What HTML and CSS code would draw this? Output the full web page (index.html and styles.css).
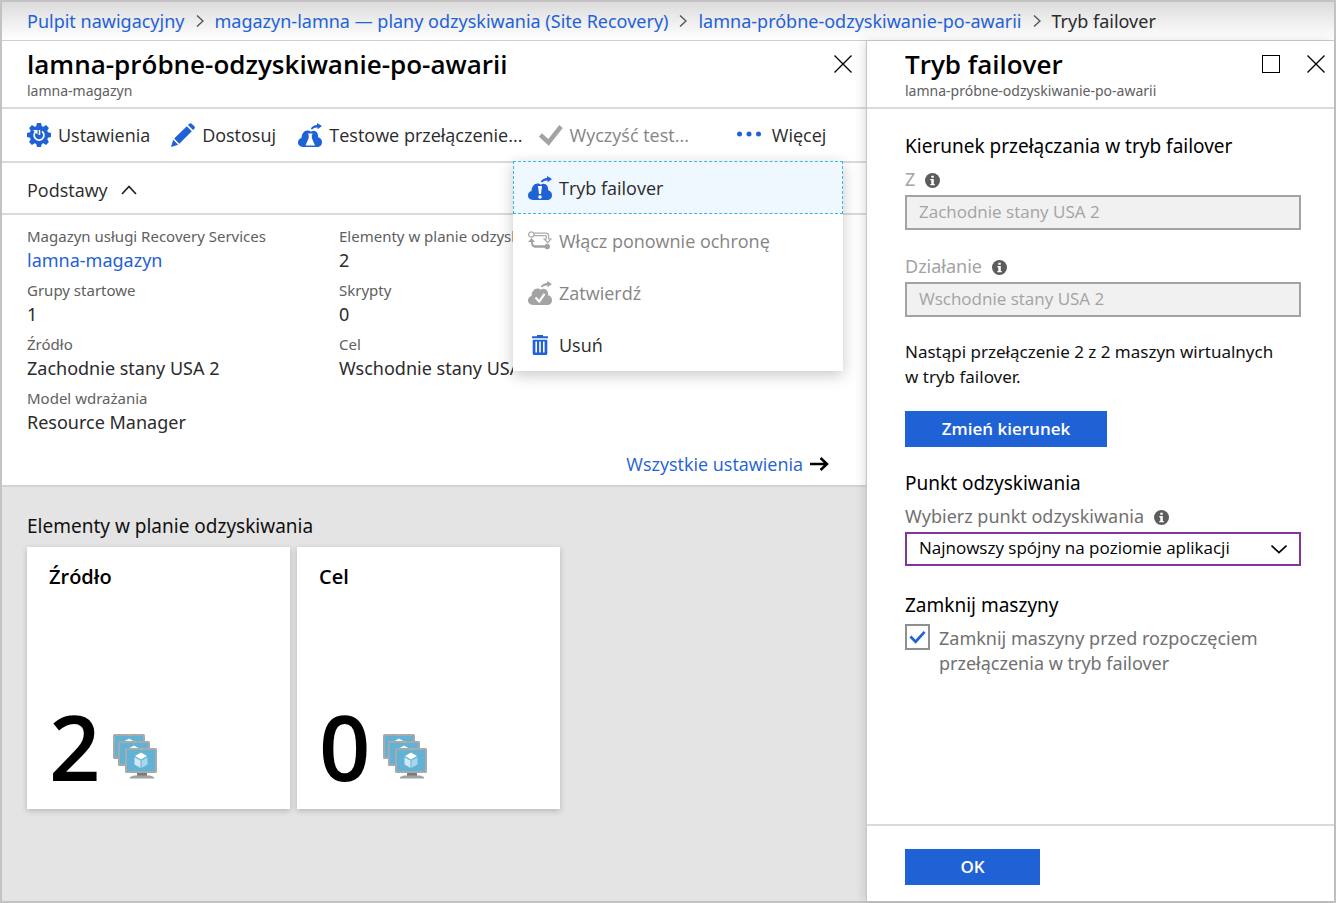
FILE: index.html
```html
<!DOCTYPE html>
<html lang="pl">
<head>
<meta charset="utf-8">
<meta name="viewport" content="width=device-width, initial-scale=1">
<title>Tryb failover</title>
<link rel="stylesheet" href="styles.css">
</head>
<body>
<svg class="defs" aria-hidden="true">
  <symbol id="cloud" viewBox="0 0 24 24">
    <path d="M5 24C2 24 0 22 0 19.300C0 17 1.500 15.400 3.500 14.900C3.700 11 6 7.600 9.500 7.600C11 7.600 12 8 12.800 8.800C14 7.600 16 7.400 17.500 8.300C19.600 9.500 20.300 12 20.200 14.300C22.600 14.900 24 16.900 24 19.200C24 22 22 24 19 24Z"/>
    <path d="M12.800 5.600C14.200 3 16.500 1.900 19 1.900V0L24 3L19.600 6.300V4.500C17.200 4.300 15.500 5 14 6.600Z"/>
  </symbol>
  <symbol id="close" viewBox="0 0 18 18"><path d="M.500.500L17.500 17.500M17.500.500L.500 17.500" fill="none" stroke="#000" stroke-width="1.300"/></symbol>
  <symbol id="chevron" viewBox="0 0 8 12"><path d="M1 .500L7 6L1 11.500" fill="none" stroke="#555" stroke-width="1.400"/></symbol>
  <symbol id="info" viewBox="0 0 15 15"><circle cx="7.500" cy="7.500" r="7.500" fill="#5c5c5c"/><path d="M6.300 2.700h2.500v2h-2.500zM5.300 6h3.500v5h1v1.300H5.300V11h1V7.300h-1z" fill="#fff"/></symbol>
  <symbol id="monitor" viewBox="0 0 32 31">
    <rect width="32" height="25" rx="1.500" fill="#a7a9ab"/>
    <rect x="2" y="2" width="28" height="21" fill="#62b2d8"/>
    <path d="M15 .500h3v1h-3z" fill="#c5bd6a"/>
    <path d="M16 4.500L22 8L16 11.500L10 8Z" fill="#fff"/>
    <path d="M9.500 9.200L15.500 12.600V20L9.500 16.500Z" fill="#cfe8f4"/>
    <path d="M22.500 9.200L16.500 12.600V20L22.500 16.500Z" fill="#a8d6ec"/>
  </symbol>
  <symbol id="machines" viewBox="0 0 45 46">
    <use href="#monitor" x="0" y="0" width="32" height="31"/>
    <use href="#monitor" x="5" y="7" width="32" height="31"/>
    <use href="#monitor" x="11" y="14" width="34" height="31" preserveAspectRatio="xMaxYMin"/>
    <path d="M24 39h10v3H24z" fill="#7a7a7a"/>
    <path d="M17 43l4-1.500h16l4 1.500v1.500H17z" fill="#a0a1a2"/>
  </symbol>
</svg>
<div class="portal">
  <nav class="breadcrumb" aria-label="Ścieżka nawigacji">
    <a href="#">Pulpit nawigacyjny</a>
    <svg class="crumb-sep"><use href="#chevron"/></svg>
    <a href="#">magazyn-lamna — plany odzyskiwania (Site Recovery)</a>
    <svg class="crumb-sep"><use href="#chevron"/></svg>
    <a href="#">lamna-próbne-odzyskiwanie-po-awarii</a>
    <svg class="crumb-sep"><use href="#chevron"/></svg>
    <span>Tryb failover</span>
  </nav>
  <div class="blades">
    <main class="plan">
      <header class="blade-head">
        <div>
          <h1 class="blade-title">lamna-próbne-odzyskiwanie-po-awarii</h1>
          <p class="blade-sub">lamna-magazyn</p>
        </div>
        <button class="icon-btn" type="button" aria-label="Zamknij"><svg class="win-icon"><use href="#close"/></svg></button>
      </header>
      <div class="toolbar">
        <button class="tool" type="button">
          <svg class="icon" viewBox="0 0 24 24"><g fill="#1f62d6"><circle cx="12" cy="12" r="9.300"/><path id="teeth" d="M9 4L10 0h4L15 4v16L14 24h-4L9 20z"/><use href="#teeth" transform="rotate(45 12 12)"/><use href="#teeth" transform="rotate(90 12 12)"/><use href="#teeth" transform="rotate(135 12 12)"/></g><path d="M8.300 9A4.900 4.900 0 1 0 15 8.300" fill="none" stroke="#fff" stroke-width="1.700"/><path d="M6 7h4.500v4.500z" fill="#fff"/><path d="M12.500 7v5" stroke="#fff" stroke-width="1.500"/></svg>
          <span>Ustawienia</span></button>
        <button class="tool" type="button">
          <svg class="icon" viewBox="0 0 24 24"><path fill="#1f62d6" d="M0 24L2.200 16.800L7.200 21.800ZM3.200 15.500L15.800 3.200L20.800 8.200L8.300 20.700ZM17 2L18.300.7Q19.500-.3 20.700.7L23.300 3.300Q24.500 4.500 23.300 5.700L22 7Z"/></svg>
          <span>Dostosuj</span></button>
        <button class="tool" type="button">
          <svg class="icon" viewBox="0 0 24 24"><use href="#cloud" fill="#1f62d6"/><path d="M10 10.500h4.500v1h-.700v3.500l3.200 7.500H7.500l3.200-7.500v-3.500H10z" fill="#fff"/></svg>
          <span>Testowe przełączenie...</span></button>
        <button class="tool tool-off" type="button" disabled>
          <svg class="icon" viewBox="0 0 24 24"><path d="M1.500 12L9.500 19.500L22 3.500" fill="none" stroke="#a3a3a3" stroke-width="4.500"/></svg>
          <span>Wyczyść test...</span></button>
        <button class="tool tool-more" type="button" aria-expanded="true">
          <svg class="icon" viewBox="0 0 24 24"><g fill="#1f62d6"><circle cx="2.500" cy="11" r="2.500"/><circle cx="12" cy="11" r="2.500"/><circle cx="21.500" cy="11" r="2.500"/></g></svg>
          <span>Więcej</span></button>
        <div class="menu" role="menu">
          <button class="menu-item menu-current" type="button" role="menuitem">
            <svg class="icon" viewBox="0 0 24 24"><use href="#cloud" fill="#1f62d6"/><path d="M10 10h4l-1 8h-2z" fill="#fff"/><circle cx="12" cy="21" r="1.800" fill="#fff"/></svg>
            Tryb failover</button>
          <button class="menu-item" type="button" role="menuitem" disabled>
            <svg class="icon" viewBox="0 0 24 24"><g fill="none" stroke="#aaa" stroke-width="1.200"><circle cx="3.300" cy="5.500" r="2.700"/><path d="M6 4.200H18q2.700.2 2.700 3V10H23l-3.300 3.800L16.200 10H18.300V7.500Q18.200 6.700 17.300 6.700H6"/></g><path d="M3.500 9L7 13H5q0 3.300 2 3.300h9.700a2.800 2.800 0 1 1 0 2.400H7q-4 0-4-5.700H0z" fill="#a3a3a3"/></svg>
            Włącz ponownie ochronę</button>
          <button class="menu-item" type="button" role="menuitem" disabled>
            <svg class="icon" viewBox="0 0 24 24"><use href="#cloud" fill="#a3a3a3"/><path d="M7.500 16.500L11.200 20.500L16.500 12.800" fill="none" stroke="#fff" stroke-width="2.200"/></svg>
            Zatwierdź</button>
          <button class="menu-item" type="button" role="menuitem">
            <svg class="icon" viewBox="0 0 24 24"><path d="M9 2h6v1.300h5v2H4v-2h5zM4.700 6.700h14.600V20.500q0 1.500-1.500 1.500H6.200q-1.500 0-1.500-1.500z" fill="#1f62d6"/><path d="M8.200 8.500v11M12 8.500v11M15.800 8.500v11" stroke="#fff" stroke-width="1.600"/></svg>
            Usuń</button>
        </div>
      </div>
      <button class="section-toggle" type="button" aria-expanded="true">Podstawy
        <svg class="toggle-icon" viewBox="0 0 16 10"><path d="M1 9L8 1.500L15 9" fill="none" stroke="#222" stroke-width="1.700"/></svg></button>
      <section class="essentials">
        <dl class="facts">
          <div><dt>Magazyn usługi Recovery Services</dt><dd><a href="#">lamna-magazyn</a></dd></div>
          <div><dt>Elementy w planie odzyskiwania</dt><dd>2</dd></div>
          <div><dt>Grupy startowe</dt><dd>1</dd></div>
          <div><dt>Skrypty</dt><dd>0</dd></div>
          <div><dt>Źródło</dt><dd>Zachodnie stany USA 2</dd></div>
          <div><dt>Cel</dt><dd>Wschodnie stany USA 2</dd></div>
          <div><dt>Model wdrażania</dt><dd>Resource Manager</dd></div>
        </dl>
        <a class="all-settings" href="#">Wszystkie ustawienia
          <svg class="arrow" viewBox="0 0 19 14"><path d="M0 7h17M10.500 1L17 7L10.500 13" fill="none" stroke="#000" stroke-width="2.500"/></svg></a>
      </section>
      <section class="items">
        <h2 class="items-title">Elementy w planie odzyskiwania</h2>
        <div class="cards">
          <article class="card"><h3 class="card-title">Źródło</h3><div class="card-count"><span>2</span><svg class="machines"><use href="#machines"/></svg></div></article>
          <article class="card"><h3 class="card-title">Cel</h3><div class="card-count"><span>0</span><svg class="machines"><use href="#machines"/></svg></div></article>
        </div>
      </section>
    </main>
    <aside class="failover">
      <header class="blade-head">
        <div>
          <h2 class="blade-title">Tryb failover</h2>
          <p class="blade-sub">lamna-próbne-odzyskiwanie-po-awarii</p>
        </div>
        <div class="win-btns">
          <button class="icon-btn" type="button" aria-label="Maksymalizuj"><svg class="win-icon" viewBox="0 0 18 18"><rect x=".5" y=".5" width="17" height="17" fill="none" stroke="#000"/></svg></button>
          <button class="icon-btn" type="button" aria-label="Zamknij"><svg class="win-icon"><use href="#close"/></svg></button>
        </div>
      </header>
      <form class="form" id="failover-form">
        <h3 class="form-title">Kierunek przełączania w tryb failover</h3>
        <label class="label label-off" for="from">Z <svg class="info"><use href="#info"/></svg></label>
        <input class="box" id="from" type="text" value="Zachodnie stany USA 2" disabled>
        <label class="label label-off label-next" for="to">Działanie <svg class="info"><use href="#info"/></svg></label>
        <input class="box" id="to" type="text" value="Wschodnie stany USA 2" disabled>
        <p class="note">Nastąpi przełączenie 2 z 2 maszyn wirtualnych w&nbsp;tryb failover.</p>
        <button class="primary primary-wide" type="button">Zmień kierunek</button>
        <h3 class="form-title">Punkt odzyskiwania</h3>
        <label class="label" for="point">Wybierz punkt odzyskiwania <svg class="info"><use href="#info"/></svg></label>
        <div class="select-wrap">
          <select class="box box-select" id="point"><option>Najnowszy spójny na poziomie aplikacji</option></select>
          <svg class="select-arrow" viewBox="0 0 16 10"><path d="M.5 1.500L8 8.500L15.500 1.500" fill="none" stroke="#000" stroke-width="1.700"/></svg>
        </div>
        <h3 class="form-title form-title-last">Zamknij maszyny</h3>
        <div class="check-row">
          <span class="check-box"><input class="check" id="shutdown" type="checkbox" checked><svg class="tick" viewBox="0 0 18 14"><path d="M1.500 6.500L7 12L16.500 1.500" fill="none" stroke="#1f62d6" stroke-width="2.800"/></svg></span>
          <label class="check-label" for="shutdown">Zamknij maszyny przed rozpoczęciem przełączenia w tryb failover</label>
        </div>
      </form>
      <footer class="form-foot"><button class="primary" type="submit" form="failover-form">OK</button></footer>
    </aside>
  </div>
</div>
</body>
</html>
```
FILE: styles.css
```css
* { box-sizing: border-box; }
body, h1, h2, h3, p, dl, dd { margin: 0; }
body {
  font: 400 18px/24px "Open Sans", "Noto Sans", sans-serif;
  color: #2b2b2b;
  background: #fff;
}
button, input, select { font: inherit; color: inherit; }
button { border: 0; padding: 0; background: none; text-align: left; cursor: pointer; }
button:disabled { cursor: default; }
a { color: #1f62d6; text-decoration: none; }
svg { display: block; flex: none; }
.defs { position: absolute; width: 0; height: 0; }
.breadcrumb, .facts, .items-title, .form, .blade-sub { font-family: "Noto Sans", "Open Sans", sans-serif; }
.portal {
  min-height: 100vh;
  display: flex;
  flex-direction: column;
  border: 2px solid #c3c3c3;
}

.breadcrumb {
  display: flex;
  align-items: center;
  gap: 11px;
  height: 39px;
  padding-left: 25px;
  border-bottom: 1px solid #cfcfcf;
  background: linear-gradient(#dcdcdc, #fff);
  white-space: nowrap;
}
.crumb-sep { width: 8px; height: 12px; }

.blades { flex: 1; display: grid; grid-template-columns: 865fr 467fr; }
.plan { display: flex; flex-direction: column; min-width: 0; background: #fff; }
.failover {
  z-index: 1;
  display: flex;
  flex-direction: column;
  min-width: 0;
  background: #fff;
  box-shadow: -1px 0 1px #c8c8c8, -3px 0 10px rgba(0, 0, 0, .12);
}
.blade-head {
  display: flex;
  justify-content: space-between;
  height: 68px;
  padding: 7px 15px 0 25px;
  border-bottom: 2px solid #dadada;
}
.failover .blade-head { padding: 7px 9px 0 38px; }
.blade-title { font-size: 26px; line-height: 32px; font-weight: 600; color: #000; white-space: nowrap; }
.blade-sub { font-size: 14px; line-height: 22px; color: #606060; }
.icon-btn { height: 32px; }
.win-icon { width: 18px; height: 18px; }
.win-btns { display: flex; gap: 27px; }

.toolbar {
  position: relative;
  display: grid;
  grid-template-columns: 144fr 127fr 240fr 198fr 130fr;
  align-items: center;
  height: 54px;
  padding-left: 25px;
  border-bottom: 2px solid #dadada;
  white-space: nowrap;
}
.tool { display: flex; align-items: center; gap: 7px; }
.tool-off { color: #858585; }
.tool-more { gap: 11px; }
.icon { width: 24px; height: 24px; }
.menu {
  position: absolute;
  top: 52px;
  right: 24px;
  width: 330px;
  background: #fff;
  box-shadow: 0 4px 14px rgba(0, 0, 0, .22);
}
.menu-item {
  display: flex;
  align-items: center;
  gap: 7px;
  width: 100%;
  height: 52px;
  padding: 0 15px;
}
.menu-item:disabled { color: #858585; }
.menu-current { height: 53px; margin-bottom: 1px; padding: 0 14px; border: 1px dashed #39b8e8; background: #eff7ff; }

.section-toggle {
  display: flex;
  align-items: center;
  gap: 13px;
  height: 52px;
  padding: 3px 0 0 25px;
  border-bottom: 2px solid #dadada;
}
.toggle-icon { width: 16px; height: 10px; }
.essentials { padding: 9px 38px 9px 25px; border-bottom: 2px solid #d2d2d2; }
.facts { display: grid; grid-template-columns: 312fr 174fr 316fr; row-gap: 6px; white-space: nowrap; }
.facts div { min-width: 0; overflow: hidden; }
.facts div:nth-child(odd) { grid-column: 1; }
.facts div:nth-child(even) { grid-column: 2; }
.facts dt { font-size: 15px; color: #606060; }
.all-settings {
  display: flex;
  align-items: center;
  justify-content: flex-end;
  gap: 7px;
  margin-top: 18px;
}
.arrow { width: 19px; height: 14px; }

.items { flex: 1; padding: 26px 25px; background: #e4e4e4; }
.items-title { font-size: 19px; line-height: 26px; font-weight: 400; color: #111; }
.cards { display: flex; flex-wrap: wrap; gap: 7px; margin-top: 8px; }
.card {
  display: flex;
  flex-direction: column;
  justify-content: space-between;
  width: 263px;
  height: 262px;
  padding: 18px 22px;
  background: #fff;
  box-shadow: 0 2px 6px rgba(0, 0, 0, .2);
}
.card-title { font-size: 20px; font-weight: 600; color: #000; }
.card-count { display: flex; align-items: flex-end; gap: 13px; color: #000; }
.card-count span { font-size: 90px; line-height: 90px; font-weight: 600; }
.machines { width: 45px; height: 46px; margin-bottom: 11px; }

.form { flex: 1; padding: 24px 33px 24px 38px; }
.form-title { font-size: 19px; line-height: 26px; font-weight: 400; color: #000; }
.label { display: flex; align-items: center; gap: 10px; height: 24px; margin-top: 8px; margin-bottom: 4px; color: #717171; }
.label-off { color: #a3a3a3; }
.label-next { margin-top: 24px; }
.info { width: 15px; height: 15px; margin-top: 2px; }
.box {
  display: block;
  width: 100%;
  height: 35px;
  padding: 0 12px 2px;
  border: 2px solid #a3a3a3;
  border-radius: 0;
  background: #f1f1f1;
  font-family: "Open Sans", "Noto Sans", sans-serif;
  font-size: 17px;
}
.box:disabled { color: #a3a3a3; }
.note { margin: 22px 0; font-size: 17px; line-height: 25px; color: #111; }
.primary { width: 135px; height: 36px; background: #1f62d6; color: #fff; font-family: "Open Sans", "Noto Sans", sans-serif; font-weight: 600; font-size: 17px; text-align: center; }
.primary-wide { display: block; width: 202px; margin-bottom: 23px; }
.select-wrap { position: relative; }
.box-select { appearance: none; height: 34px; border-color: #80379b; background: #fff; color: #000; }
.select-arrow { position: absolute; right: 14px; top: 12px; width: 16px; height: 10px; pointer-events: none; }
.form-title-last { margin-top: 26px; }
.check-row { display: flex; gap: 9px; margin-top: 6px; }
.check-box { position: relative; flex: none; width: 25px; height: 26px; }
.check { appearance: none; display: block; width: 100%; height: 100%; margin: 0; border: 2px solid #8f8f8f; background: #fff; }
.tick { position: absolute; left: 4px; top: 6px; width: 17px; height: 14px; pointer-events: none; }
.check:not(:checked) + .tick { display: none; }
.check-label { padding-top: 2px; line-height: 25px; color: #717171; }
.form-foot { height: 77px; padding: 23px 38px; border-top: 2px solid #dadada; }
```
